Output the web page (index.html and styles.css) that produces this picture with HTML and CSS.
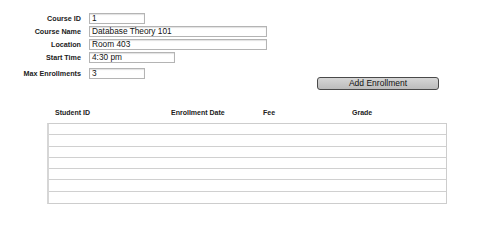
FILE: index.html
```html
<!DOCTYPE html>
<html lang="en">
<head>
    <meta charset="UTF-8">
    <title>Course</title>
    <link rel="stylesheet" href="styles.css">
</head>
<body>
    <div class="top">
        <div class="course-form">
            <label class="field-label">Course ID</label>
            <div class="field field-short">1</div>

            <label class="field-label">Course Name</label>
            <div class="field field-long">Database Theory 101</div>

            <label class="field-label">Location</label>
            <div class="field field-long">Room 403</div>

            <label class="field-label">Start Time</label>
            <div class="field field-mid">4:30 pm</div>

            <label class="field-label spaced">Max Enrollments</label>
            <div class="field field-short spaced">3</div>
        </div>
        <div class="actions">
            <button class="add-button">Add Enrollment</button>
        </div>
    </div>

    <div class="enrollments">
        <div class="table-head">
            <div class="col col-student">Student ID</div>
            <div class="col col-date">Enrollment Date</div>
            <div class="col col-fee">Fee</div>
            <div class="col col-grade">Grade</div>
        </div>
        <div class="table-body">
            <div class="table-row"></div>
            <div class="table-row"></div>
            <div class="table-row"></div>
            <div class="table-row"></div>
            <div class="table-row"></div>
            <div class="table-row"></div>
            <div class="table-row"></div>
        </div>
    </div>
</body>
</html>
```

FILE: styles.css
```css
* {
    margin: 0;
    padding: 0;
    box-sizing: border-box;
}

body {
    font-family: 'Liberation Sans', Arial, sans-serif;
    background: #ffffff;
    color: #1a1a1a;
}

.top {
    display: flex;
    align-items: flex-start;
}

.course-form {
    display: grid;
    grid-template-columns: 81px auto;
    column-gap: 8px;
    row-gap: 2px;
    align-items: center;
    padding-top: 13px;
}

.field-label {
    font-size: 7.2px;
    font-weight: bold;
    text-align: right;
    color: #222;
}

.field {
    height: 11px;
    border: 1px solid #b4b4b4;
    box-shadow: inset 0 1px 1px rgba(0, 0, 0, 0.12);
    font-size: 8.3px;
    line-height: 9px;
    padding-left: 2px;
    color: #111;
    background: #fff;
}

.spaced {
    margin-top: 3px;
}

.field-short {
    width: 56px;
}

.field-mid {
    width: 86px;
}

.field-long {
    width: 178px;
}

.actions {
    display: flex;
    padding-top: 77px;
    margin-left: 50px;
}

.add-button {
    width: 122px;
    height: 13px;
    border: 1px solid #4a4a4a;
    border-radius: 3px;
    background: linear-gradient(#d6d6d6, #bcbcbc);
    font-family: 'Liberation Sans', Arial, sans-serif;
    font-size: 8.5px;
    line-height: 11px;
    color: #111;
}

.enrollments {
    margin: 18px 0 0 47px;
    width: 400px;
}

.table-head {
    display: flex;
    padding: 0 0 0 8px;
    height: 15px;
    font-size: 7px;
    line-height: 10px;
    font-weight: bold;
    color: #222;
}

.col-student {
    width: 116px;
}

.col-date {
    width: 92px;
}

.col-fee {
    width: 89px;
}

.table-body {
    border: 1px solid #cdcdcd;
    border-left: 2px solid #d6d6d6;
}

.table-row {
    height: 11.3px;
    border-bottom: 1px solid #d0d0d0;
}

.table-row:last-child {
    border-bottom: none;
}
```
